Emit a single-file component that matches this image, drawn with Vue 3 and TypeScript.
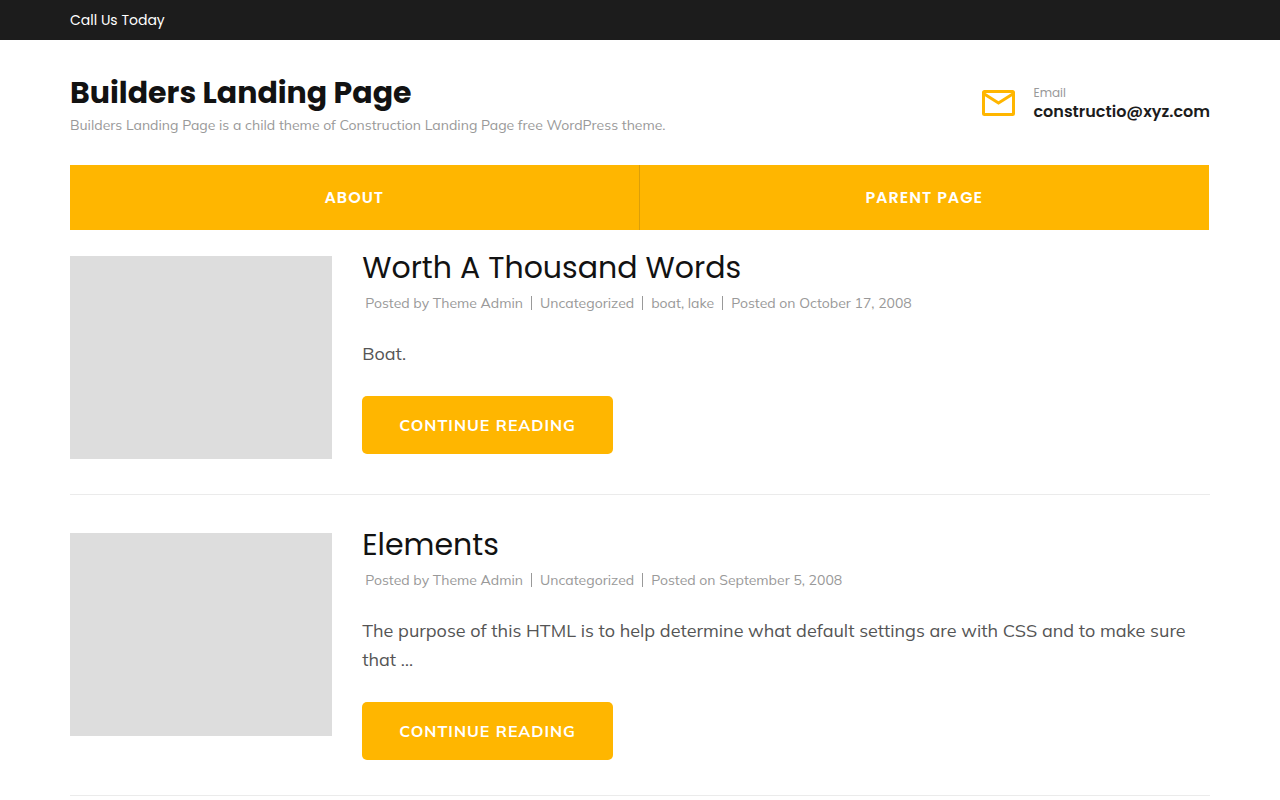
<script setup lang="ts">
interface Post {
  id: number
  title: string
  meta: string[][]
  date: string
  excerpt: string
}

const menu: string[] = ['About', 'Parent Page']

const posts: Post[] = [
  {
    id: 1,
    title: 'Worth A Thousand Words',
    meta: [['Uncategorized'], ['boat', 'lake']],
    date: 'October 17, 2008',
    excerpt: 'Boat.',
  },
  {
    id: 2,
    title: 'Elements',
    meta: [['Uncategorized']],
    date: 'September 5, 2008',
    excerpt:
      'The purpose of this HTML is to help determine what default settings are with CSS and to make sure that …',
  },
]
</script>

<template>
  <div class="page">
    <div class="topbar">
      <div class="container">Call Us Today</div>
    </div>

    <header class="container">
      <div class="masthead">
        <div>
          <h1 class="site-title"><a href="#">Builders Landing Page</a></h1>
          <p class="tagline">
            Builders Landing Page is a child theme of Construction Landing Page free WordPress theme.
          </p>
        </div>
        <div class="contact">
          <svg class="mail" viewBox="0 0 33 26" aria-hidden="true">
            <path
              fill-rule="evenodd"
              d="M2.500 0h28A2.500 2.500 0 0 1 33 2.500v21a2.500 2.500 0 0 1-2.500 2.500h-28A2.500 2.500 0 0 1 0 23.500v-21A2.500 2.500 0 0 1 2.500 0ZM3 6.200V23h27V6.200L16.500 14.700ZM3.500 3 16.500 11.200 29.500 3Z"
            />
          </svg>
          <div class="contact-text">
            <span class="contact-label">Email</span>
            <a class="contact-value" href="mailto:constructio@xyz.com">constructio@xyz.com</a>
          </div>
        </div>
      </div>
      <nav class="menu" aria-label="Primary">
        <a v-for="item in menu" :key="item" href="#">{{ item }}</a>
      </nav>
    </header>

    <main class="container posts">
      <article v-for="post in posts" :key="post.id" class="post">
        <a class="thumb" href="#" :aria-label="post.title"></a>
        <div class="post-body">
          <h2><a href="#">{{ post.title }}</a></h2>
          <div class="meta">
            <span>Posted by <a href="#">Theme Admin</a></span>
            <span v-for="(group, g) in post.meta" :key="g">
              <template v-for="(term, t) in group" :key="term"
                ><template v-if="t > 0">, </template><a href="#">{{ term }}</a></template
              >
            </span>
            <span>Posted on <a href="#">{{ post.date }}</a></span>
          </div>
          <p class="excerpt">{{ post.excerpt }}</p>
          <a class="more" href="#">Continue Reading</a>
        </div>
      </article>
    </main>
  </div>
</template>

<style>
body {
  margin: 0;
  background: #fff;
}
</style>

<style scoped>
.page {
  --accent: #ffb600;
  --heading: Poppins, Inter, sans-serif;
  --text: Mulish, Muli, "Open Sans", sans-serif;
  color: #555;
  font-family: var(--text);
  font-size: 18px;
  line-height: 29px;
}

.page a {
  color: inherit;
  text-decoration: none;
}

.container {
  box-sizing: border-box;
  width: calc(100% - 40px);
  max-width: 1140px;
  margin: 0 auto;
}

.topbar {
  padding: 10px 0;
  background: #1c1c1c;
  color: #fff;
  font-family: var(--heading);
  font-size: 14px;
  line-height: 20px;
}

.masthead {
  display: flex;
  align-items: center;
  justify-content: space-between;
  gap: 30px;
  padding: 31px 0 29px;
}

.site-title {
  margin: 0;
  color: #121212;
  font-family: var(--heading);
  font-size: 30px;
  font-weight: 700;
  line-height: 44px;
}

.tagline {
  margin: 0;
  color: #999;
  font-size: 14px;
  line-height: 21px;
}

.contact {
  display: flex;
  align-items: center;
  gap: 18px;
  padding-bottom: 2px;
  font-family: var(--heading);
}

.contact-text {
  padding-bottom: 2px;
}

.mail {
  width: 33px;
  height: 26px;
  fill: var(--accent);
}

.contact-label,
.contact-value {
  display: block;
}

.contact-label {
  color: #999;
  font-size: 12px;
  line-height: 19px;
}

.page .contact-value {
  color: #1c1c1c;
  font-size: 16px;
  font-weight: 600;
  line-height: 19px;
}

.menu {
  display: grid;
  grid-template-columns: 1fr 1fr;
  margin-right: 1px;
  background: var(--accent);
}

.menu a {
  padding: 20px;
  color: #fff;
  font-family: var(--heading);
  font-size: 16px;
  font-weight: 600;
  letter-spacing: 1px;
  line-height: 25px;
  text-align: center;
  text-transform: uppercase;
}

.menu a:not(:last-child) {
  border-right: 1px solid #dc9f08;
}

.posts {
  padding-top: 18px;
}

.post {
  display: flex;
  align-items: flex-start;
  gap: 30px;
  margin-bottom: 30px;
  padding-bottom: 35px;
  border-bottom: 1px solid #ebebeb;
}

.thumb {
  flex: 0 0 23%;
  margin-top: 8px;
  aspect-ratio: 262 / 203;
  background: #ddd;
}

.post-body {
  flex: 1;
  min-width: 0;
}

h2 {
  margin: 0;
  color: #121212;
  font-family: var(--heading);
  font-size: 30px;
  font-weight: 400;
  line-height: 40px;
}

.meta {
  display: flex;
  flex-wrap: wrap;
  margin: 5px 0 26px 3px;
  color: #999;
  font-size: 14px;
  line-height: 20px;
}

.meta span {
  display: flex;
  align-items: center;
  white-space: pre;
}

.meta span + span::before {
  content: "";
  width: 1px;
  height: 14px;
  margin: 0 8px;
  background: #999;
}

.excerpt {
  margin: 0 0 28px;
}

.page .more {
  display: inline-block;
  padding: 19px 37px;
  border-radius: 5px;
  background: var(--accent);
  color: #fff;
  font-size: 16px;
  font-weight: 700;
  letter-spacing: 1px;
  line-height: 20px;
  text-transform: uppercase;
  vertical-align: top;
}
</style>
